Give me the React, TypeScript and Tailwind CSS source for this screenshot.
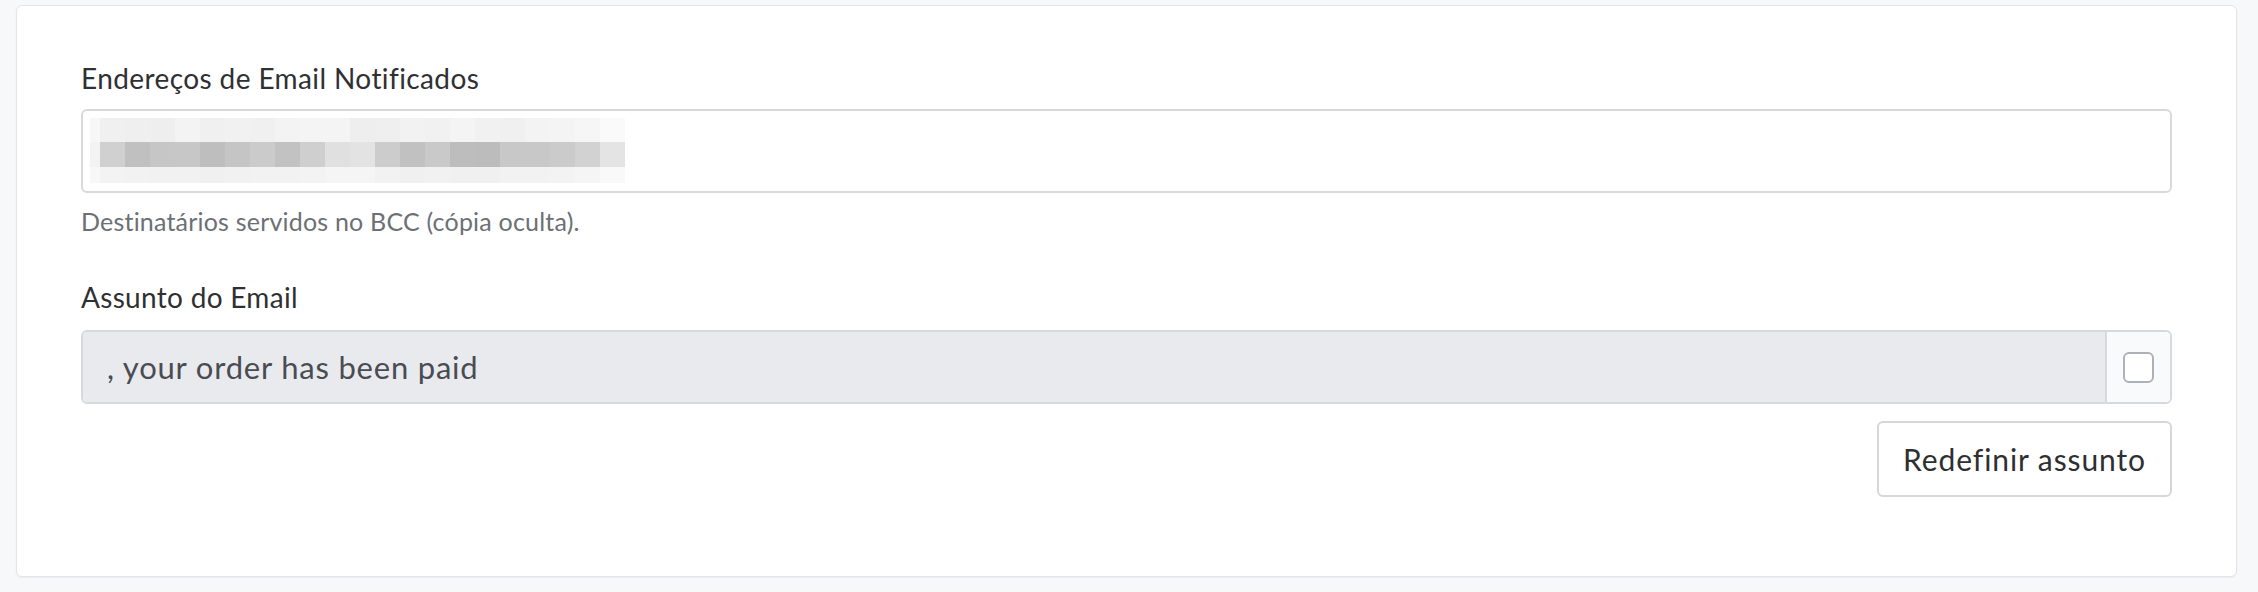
import { useState } from "react"

const topRow = ["#f7f7f7", "#f0f0f0", "#efefef", "#eeeeee", "#f3f3f3", "#f0f0f0", "#f1f1f1", "#f0f0f0", "#f3f3f4", "#f4f4f5", "#f4f4f4", "#eeeeee", "#efefef", "#f2f2f2", "#f1f1f1", "#f4f4f5", "#f1f1f1", "#f0f0f0", "#f3f3f3", "#f4f4f4", "#f6f6f6", "#fafafa"]
const midRow = ["#f3f3f3", "#d0d0d0", "#c0c0c0", "#c6c6c6", "#c7c7c7", "#bebebe", "#c5c5c5", "#cbcbcb", "#c2c2c2", "#cfcfcf", "#e0e0e0", "#e3e3e3", "#cccccc", "#c1c1c1", "#c9c9c9", "#bdbdbd", "#bcbcbc", "#c8c8c8", "#c8c8c8", "#cbcbcb", "#d2d2d2", "#e4e4e4"]
const botRow = ["#f8f8f8", "#f3f3f3", "#f2f2f2", "#f1f1f1", "#f1f1f1", "#f0f0f0", "#f1f1f1", "#f2f2f3", "#f2f2f2", "#f3f3f3", "#f5f5f5", "#f5f5f5", "#f2f2f2", "#f0f0f0", "#f1f1f1", "#f0f0f0", "#f0f0f0", "#f2f2f2", "#f2f2f2", "#f3f3f3", "#f5f5f5", "#f9f9f9"]

// pixelated (redacted) email address
function Redacted() {
  const rows = [
    { colors: topRow, h: "h-[24px]" },
    { colors: midRow, h: "h-[25px]" },
    { colors: botRow, h: "h-[16px]" },
  ]
  return (
    <div className="flex flex-col">
      {rows.map((row, r) => (
        <div key={r} className={`flex ${row.h}`}>
          {row.colors.map((c, i) => (
            <div
              key={i}
              className={i === 0 ? "w-[10px] h-full" : "w-[25px] h-full"}
              style={{ backgroundColor: c }}
            />
          ))}
        </div>
      ))}
    </div>
  )
}

export default function App() {
  const [override, setOverride] = useState(false)

  return (
    <div className="min-h-screen bg-[#f7f8fa] pt-[5px] pl-[16px] pr-[21px] font-[Lato,sans-serif]">
      <div className="rounded-[6px] border border-[#e3e5e9] bg-white shadow-[0_1px_2px_rgba(0,0,0,0.05)] px-[64px] pt-[54px] pb-[79px]">
        <label className="block text-[28px] leading-[36px] tracking-[0.4px] text-[#2f3033] mb-[13px]">
          Endereços de Email Notificados
        </label>
        <div className="h-[84px] rounded-[6px] border-2 border-[#d7d9dd] bg-white pl-[7px] pt-[7px]">
          <Redacted />
        </div>
        <p className="mt-[12px] text-[25px] leading-[32px] tracking-[0.2px] text-[#6c7075]">
          Destinatários servidos no BCC (cópia oculta).
        </p>

        <label className="mt-[42px] block text-[28px] leading-[36px] tracking-[0.3px] text-[#2f3033] mb-[15px]">
          Assunto do Email
        </label>
        <div className="flex h-[74px] rounded-[6px] border-2 border-[#d7d9dd] overflow-hidden">
          <input
            readOnly
            value=", your order has been paid"
            className="flex-1 bg-[#e9eaee] px-[24px] text-[31px] tracking-[0.8px] text-[#494c52] outline-none"
          />
          <div className="flex w-[65px] items-center justify-center border-l-2 border-[#d7d9dd] bg-[#f9fafb]">
            <input
              type="checkbox"
              checked={override}
              onChange={(e) => setOverride(e.target.checked)}
              className="h-[31px] w-[31px] appearance-none rounded-[6px] border-2 border-[#adb1b8] bg-white"
            />
          </div>
        </div>

        <div className="mt-[17px] flex justify-end">
          <button className="h-[76px] rounded-[6px] border-2 border-[#d5d7db] bg-white px-[24px] text-[30px] tracking-[0.9px] text-[#2e2f31]">
            Redefinir assunto
          </button>
        </div>
      </div>
    </div>
  )
}
